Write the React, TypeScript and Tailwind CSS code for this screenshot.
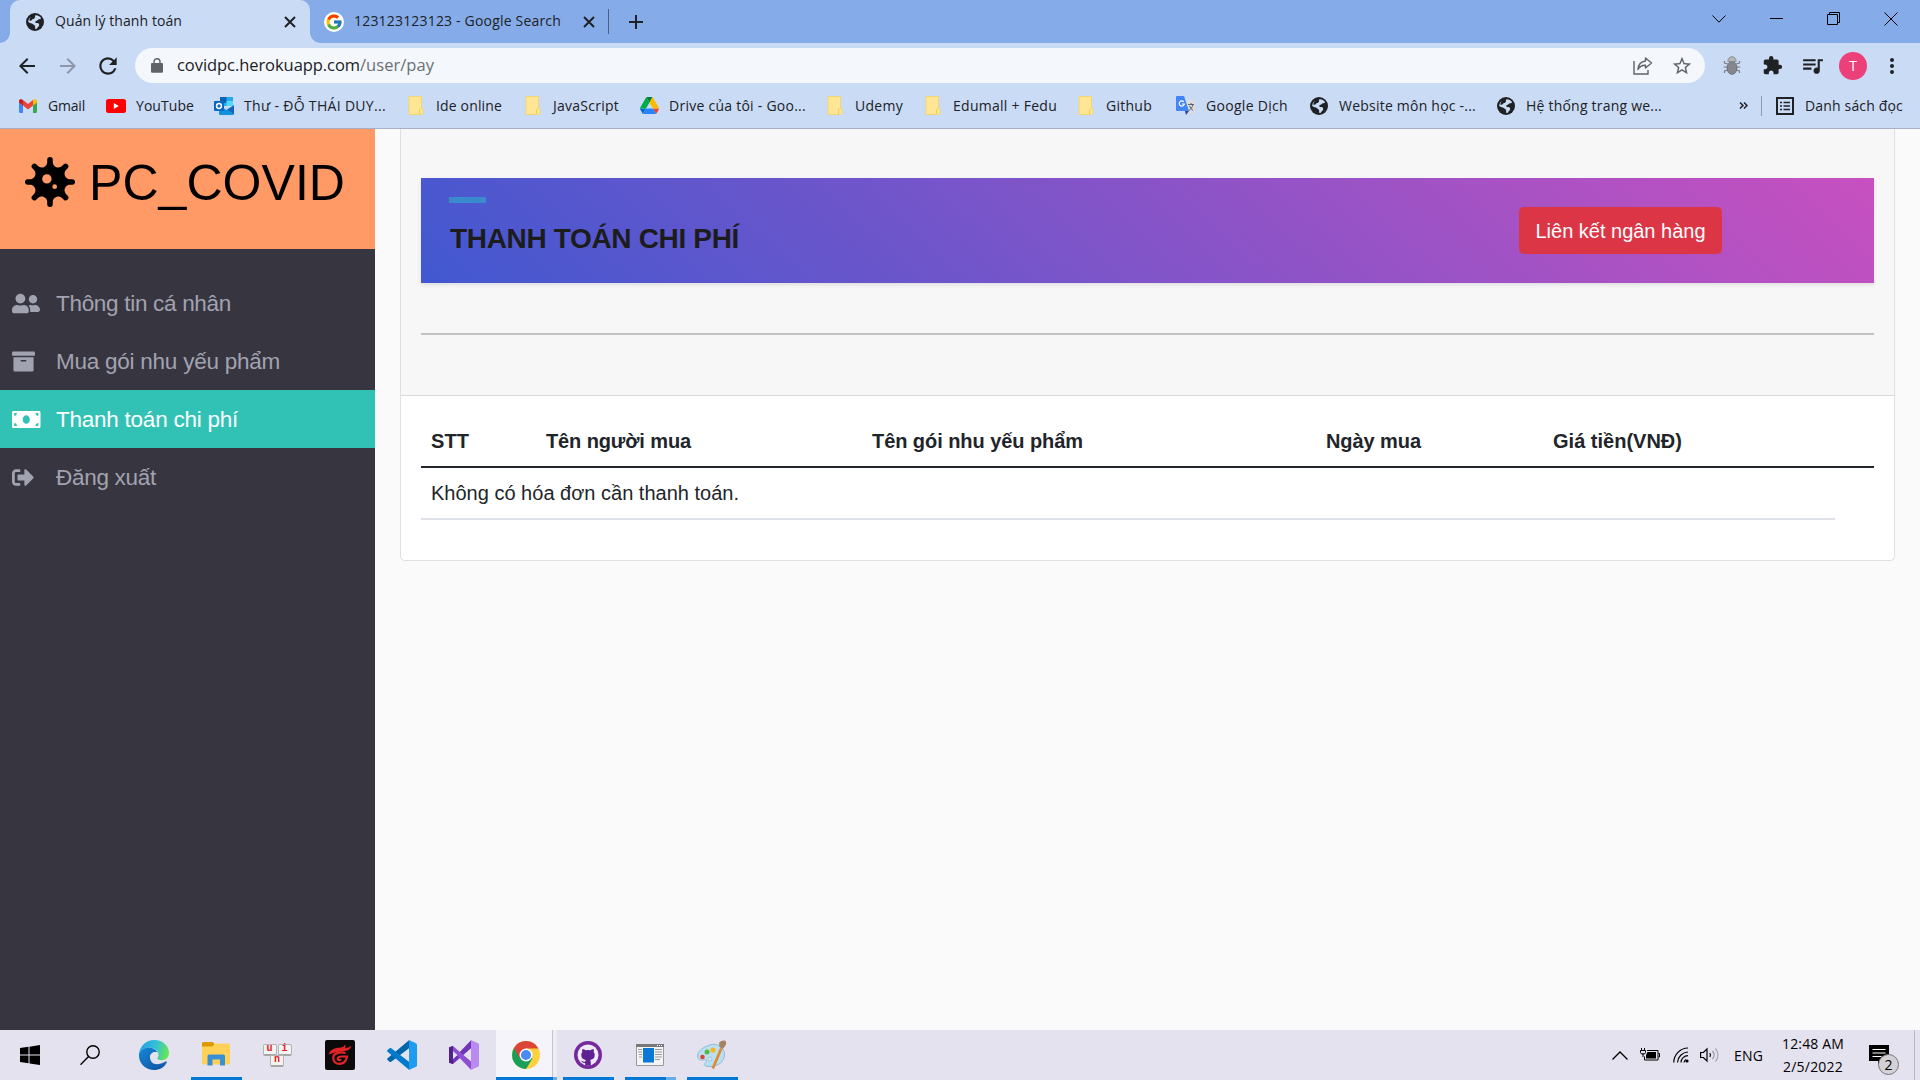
import React, { useLayoutEffect, useRef, type ReactNode } from 'react';
import { FaVirus, FaUserFriends, FaArchive, FaSignOutAlt, FaMoneyBill } from 'react-icons/fa';
import { MdQueueMusic, MdExtension, MdStarBorder, MdArrowBack, MdArrowForward, MdRefresh } from 'react-icons/md';
import { FcGoogle } from 'react-icons/fc';

/* A single line of text whose letter spacing is tuned to fill the given width. */
function Fit({ w, children, className = '' }: { w: number; children: string; className?: string }) {
  const ref = useRef<HTMLSpanElement>(null);
  useLayoutEffect(() => {
    const el = ref.current;
    if (!el) return;
    el.style.letterSpacing = '0px';
    const natural = el.getBoundingClientRect().width;
    el.style.letterSpacing = `${(w - natural) / children.length}px`;
  }, [w, children]);
  return (
    <span ref={ref} className={`inline-block whitespace-nowrap ${className}`}>
      {children}
    </span>
  );
}

function CloseX() {
  return (
    <svg width="12" height="12" viewBox="0 0 12 12" stroke="#202124" strokeWidth="2" className="shrink-0">
      <path d="M1 1l10 10M11 1L1 11" />
    </svg>
  );
}

function Globe() {
  return (
    <svg width="18" height="18" viewBox="0 0 18 18" className="shrink-0">
      <circle cx="9" cy="9" r="9" fill="#202124" />
      <path d="M9.500 2.200C12 2.100 14 3.400 15 5c-.2 1.200-1 1.200-2 1.300-1.200.1-1.300 1.200-2.400 1.500-1 .3-1.600.8-1.200 1.700.5.9 1.800.3 2.800.8 1 .6 1.200 1.300.8 2.400-.4 1-1.300 1.300-1.700 2.200-.3.7-1 1-1.800 1.100-.6-.8-.2-1.900-.4-2.800-.3-1.200-1.600-1.400-2.400-2.200-.9-.9-2.800-.6-4.500-2C2.300 6.500 3.500 4.700 5.200 3.500c.3 1 .2 1.800 1.200 2.200 1.200.4 2-.3 2.100-1.400.1-.8.3-1.500 1-2.100z" fill="#cadbf6" />
      <path d="M7.200 1.500C9 2.200 9.500 3.500 8.600 5 7.800 6.300 6.500 5.500 5.800 7c-.5 1-1.500.9-2.500.5C3.500 5 5 2.500 7.200 1.500z" fill="#202124" />
    </svg>
  );
}

function TabStrip() {
  return (
    <header className="flex h-[43px] bg-[#85ace9]">
      <div className="relative ml-2.5 flex w-[300px] items-center rounded-t-[10px] bg-[#cadbf6] pr-3.5 pl-4">
        <span className="absolute bottom-0 -left-2.5 size-2.5 bg-[radial-gradient(circle_at_0_0,#85ace9_9.5px,#cadbf6_10px)]" />
        <span className="absolute -right-2.5 bottom-0 size-2.5 bg-[radial-gradient(circle_at_100%_0,#85ace9_9.5px,#cadbf6_10px)]" />
        <Globe />
        <Fit w={127} className="ml-[11px] -translate-y-px text-[14px]">Quản lý thanh toán</Fit>
        <span className="ml-auto"><CloseX /></span>
      </div>
      <div className="flex w-[298px] items-center pl-3.5">
        <span className="flex size-5 items-center justify-center rounded-full bg-white"><FcGoogle size={18} /></span>
        <Fit w={207} className="ml-[10px] -translate-y-px text-[14px]">123123123123 - Google Search</Fit>
        <span className="ml-[22px]"><CloseX /></span>
      </div>
      <div className="my-auto h-[25px] w-px bg-[#4b5f80]" />
      <svg width="16" height="16" viewBox="0 0 16 16" stroke="#202124" strokeWidth="2" className="my-auto ml-[19px]">
        <path d="M8 1v14M1 8h14" />
      </svg>
      <div className="mt-[11px] mr-[22px] ml-auto flex h-[15px] items-center gap-[44px] text-black">
        <svg width="14" height="8" viewBox="0 0 14 8" fill="none" stroke="currentColor"><path d="M.5 .5L7 7.2L13.500 .5" /></svg>
        <svg width="13" height="1" viewBox="0 0 13 1"><path d="M0 0h13v1H0z" /></svg>
        <svg width="13" height="13" viewBox="0 0 13 13" fill="none" stroke="currentColor"><path d="M.5 2.500h10v10h-10zM2.500 2.500v-2h10v10h-2" /></svg>
        <svg width="14" height="14" viewBox="0 0 14 14" stroke="currentColor"><path d="M.5 .5l13 13M13.500 .5l-13 13" /></svg>
      </div>
    </header>
  );
}

function BeetleIcon() {
  return (
    <svg width="18" height="19" viewBox="0 0 18 19" fill="none" stroke="#7c7f84" strokeWidth="1.200">
      <path d="M5 8L1.500 7V5M4.500 11H.5M5 14l-3.500 1v2M13 8l3.500-1V5M13.500 11h4M13 14l3.500 1v2" />
      <ellipse cx="9" cy="12" rx="5" ry="6.300" fill="#85888c" stroke="#64676b" strokeWidth=".8" />
      <path d="M4.800 5.500a4.200 4.800 0 0 1 8.400 0z" fill="#b5b5b5" strokeWidth=".8" />
    </svg>
  );
}

function Toolbar() {
  return (
    <div className="flex h-10 items-center bg-[#cadbf6] pt-[5px]">
      <MdArrowBack size={24} className="ml-[15px] text-[#202124]" />
      <MdArrowForward size={24} className="ml-[17px] text-[#8c96a8]" />
      <MdRefresh size={26} className="ml-[15px] text-[#202124]" />
      <div className="ml-[14px] flex h-[35px] w-[1570px] items-center rounded-full bg-[#f4f8fd] pr-[12px] pl-4">
        <svg width="12" height="15" viewBox="0 0 12 15" fill="#5f6368">
          <path d="M1.500 5h9A1.200 1.200 0 0 1 12 6.200v7.300a1.200 1.200 0 0 1-1.200 1.200H1.200A1.200 1.200 0 0 1 0 13.500V6.200A1.200 1.200 0 0 1 1.500 5z" />
          <path d="M3 6V3.700a3 3 0 0 1 6 0V6" fill="none" stroke="#5f6368" strokeWidth="1.400" />
        </svg>
        <div className="ml-[14px] flex text-[16.5px] text-[#202124]">
          <Fit w={183}>covidpc.herokuapp.com</Fit>
          <Fit w={74} className="text-[#6b6f75]">/user/pay</Fit>
        </div>
        <svg width="20" height="18" viewBox="0 0 20 18" fill="none" stroke="#5f6368" strokeWidth="1.400" className="mr-[18px] ml-auto">
          <path d="M1 4v13h14v-4" />
          <path d="M12.500 1l6 5-6 5V8.200C9 8 6.500 9.500 5 12.500c.3-5 3-8 7.500-8.500z" strokeLinejoin="round" />
        </svg>
        <MdStarBorder size={22} className="text-[#5f6368]" />
      </div>
      <span className="ml-[18px]"><BeetleIcon /></span>
      <MdExtension size={21} className="ml-[21px] text-[#202124]" />
      <MdQueueMusic size={25} className="ml-[17px] text-[#202124]" />
      <span className="ml-3.5 flex size-7 items-center justify-center rounded-full bg-[#ec407a] text-[14px] text-white">T</span>
      <svg width="6" height="18" viewBox="0 0 6 18" fill="#202124" className="ml-[22px]">
        <circle cx="3" cy="3" r="2" /><circle cx="3" cy="9" r="2" /><circle cx="3" cy="15" r="2" />
      </svg>
    </div>
  );
}

function Gmail() {
  return (
    <svg width="18" height="14" viewBox="0 0 18 14">
      <path d="M0 3v9.500A1.500 1.500 0 0 0 1.500 14H4V5.500z" fill="#4285f4" />
      <path d="M18 3v9.500a1.500 1.500 0 0 1-1.500 1.500H14V5.500z" fill="#34a853" />
      <path d="M4 1l5 4 5-4v5.500l-5 4-5-4z" fill="#ea4335" />
      <path d="M0 3V2A1.900 1.900 0 0 1 3 .4L4 1v5.500L0 3.600z" fill="#c5221f" />
      <path d="M18 3V2a1.900 1.900 0 0 0-3-1.600L14 1v5.500l4-2.900z" fill="#fbbc04" />
    </svg>
  );
}
function Youtube() {
  return (
    <svg width="20" height="14" viewBox="0 0 20 14"><rect width="20" height="14" rx="2.500" fill="#f00" /><path d="M7.800 4v6l5-3z" fill="#fff" /></svg>
  );
}
function Outlook() {
  return (
    <svg width="20" height="18" viewBox="0 0 20 18">
      <path d="M6 0h13v9H6z" fill="#28a8ea" /><path d="M6 0h6.500v6H6z" fill="#0364b8" /><path d="M12.500 4H19v5h-6.500z" fill="#50d9ff" />
      <path d="M5 8l7.500 5L20 8v9a1 1 0 0 1-1 1H6a1 1 0 0 1-1-1z" fill="#1490df" /><path d="M20 8.500V17l-7-4.500z" fill="#1565c0" />
      <rect y="4" width="10" height="10" rx="1" fill="#0a67c2" /><circle cx="5" cy="9" r="2.400" fill="none" stroke="#fff" strokeWidth="1.500" />
    </svg>
  );
}
function Folder() {
  return (
    <svg width="16" height="19" viewBox="0 0 16 19"><path d="M1 .5h12.500V12l1.500 1v4.500l-1 1H1z" fill="#ffe694" stroke="#f3d573" /><path d="M11.500 18v-4l2-2" fill="none" stroke="#f0c95a" /></svg>
  );
}
function Drive() {
  return (
    <svg width="19" height="17" viewBox="0 0 87.300 78">
      <path d="m6.600 66.850 3.850 6.650c.8 1.400 1.950 2.500 3.300 3.300l13.750-23.800h-27.500c0 1.550.4 3.100 1.200 4.500z" fill="#0066da" />
      <path d="m43.650 25-13.750-23.800c-1.350.8-2.500 1.900-3.300 3.300l-25.400 44a9.060 9.060 0 0 0 -1.200 4.500h27.500z" fill="#00ac47" />
      <path d="m73.550 76.800c1.350-.8 2.500-1.900 3.300-3.300l1.600-2.750 7.650-13.250c.8-1.400 1.200-2.950 1.200-4.500h-27.502l5.852 11.500z" fill="#ea4335" />
      <path d="m43.650 25 13.750-23.800c-1.350-.8-2.900-1.200-4.500-1.200h-18.500c-1.600 0-3.150.45-4.500 1.200z" fill="#00832d" />
      <path d="m59.800 53h-32.300l-13.750 23.800c1.350.8 2.900 1.200 4.500 1.200h50.800c1.600 0 3.150-.45 4.500-1.200z" fill="#2684fc" />
      <path d="m73.400 26.500-12.700-22c-.8-1.400-1.950-2.500-3.300-3.300l-13.750 23.800 16.150 28h27.450c0-1.550-.4-3.100-1.200-4.500z" fill="#ffba00" />
    </svg>
  );
}
function Translate() {
  return (
    <svg width="19" height="19" viewBox="0 0 19 19">
      <path d="M8 4h10a1 1 0 0 1 1 1v12a1 1 0 0 1-1 1h-7z" fill="#dadce0" />
      <path d="M12 8.500h6M15 7v1.500M17 8.500c-.6 2.500-2 4.500-4 6M13.500 10c.8 2 2 3.500 3.700 4.500" stroke="#5f6368" fill="none" />
      <path d="M1 0h7l5 15H1a1 1 0 0 1-1-1V1a1 1 0 0 1 1-1z" fill="#4285f4" /><path d="M9 15h4l-3 4z" fill="#3040a8" />
      <path d="M7.800 5.800A2.600 2.600 0 1 0 8.400 8H6" stroke="#fff" strokeWidth="1.200" fill="none" />
    </svg>
  );
}

/* icon, label, icon slot width, label width, distance to the next bookmark */
const bookmarks: [ReactNode, string, number, number, number][] = [
  [<Gmail />, 'Gmail', 29, 37, 87],
  [<Youtube />, 'YouTube', 30, 58, 108],
  [<Outlook />, 'Thư - ĐỖ THÁI DUY...', 30, 142, 194],
  [<Folder />, 'Ide online', 28, 66, 117],
  [<Folder />, 'JavaScript', 28, 66, 115],
  [<Drive />, 'Drive của tôi - Goo...', 29, 137, 187],
  [<Folder />, 'Udemy', 28, 48, 98],
  [<Folder />, 'Edumall + Fedu', 28, 104, 153],
  [<Folder />, 'Github', 28, 46, 98],
  [<Translate />, 'Google Dịch', 30, 82, 134],
  [<Globe />, 'Website môn học -...', 29, 137, 187],
  [<Globe />, 'Hệ thống trang we...', 29, 136, 244],
];

function BookmarkBar() {
  return (
    <div className="flex h-[46px] items-center border-b border-[#a5b0c8] bg-[#cadbf6] pl-[19px] text-[14px]">
      {bookmarks.map(([icon, label, iw, lw, step], i) => (
        <div key={i} className="flex shrink-0 items-center" style={{ width: step }}>
          <span className="shrink-0" style={{ width: iw }}>{icon}</span>
          <Fit w={lw}>{label}</Fit>
        </div>
      ))}
      <svg width="9" height="7" viewBox="0 0 9 7" fill="none" stroke="#202124" strokeWidth="1.500" className="-ml-[2px]">
        <path d="M1 .5l3 3-3 3M5 .5l3 3-3 3" />
      </svg>
      <div className="ml-[13px] h-5 w-px bg-[#8d9ab3]" />
      <svg width="18" height="18" viewBox="0 0 18 18" fill="none" stroke="#202124" strokeWidth="2" className="ml-[14px]">
        <path d="M1 1h16v16H1z" /><path d="M4 5.500h2M7.500 5.500H14M4 9h2M7.500 9H14M4 12.500h2M7.500 12.500H14" strokeWidth="1.600" />
      </svg>
      <Fit w={98} className="ml-[11px]">Danh sách đọc</Fit>
    </div>
  );
}

const menu: { icon: typeof FaVirus; label: string; w: number; size: string; active?: boolean }[] = [
  { icon: FaUserFriends, label: 'Thông tin cá nhân', w: 175, size: 'h-[23px] w-[28px]' },
  { icon: FaArchive, label: 'Mua gói nhu yếu phẩm', w: 224, size: 'h-[23px] w-[23px]' },
  { icon: FaMoneyBill, label: 'Thanh toán chi phí', w: 182, size: 'h-[23px] w-[28.5px]', active: true },
  { icon: FaSignOutAlt, label: 'Đăng xuất', w: 100, size: 'h-[23px] w-[22px]' },
];

function Sidebar() {
  return (
    <aside className="flex w-[375px] shrink-0 flex-col bg-[#373640]">
      <div className="flex h-[120px] bg-[#ff9966] pt-7 pl-[25px] text-black">
        <FaVirus size={50} />
        <Fit w={256} className="mt-[-4px] ml-[14px] text-[50px] leading-[60px]">PC_COVID</Fit>
      </div>
      <nav className="mt-[25px]">
        {menu.map(({ icon: Icon, label, w, size, active }) => (
          <a key={label} className={`flex h-[58px] items-center pl-3 text-[22.5px] ${active ? 'bg-[#32c2b5] text-white' : 'text-[#a2a3b1]'}`}>
            <span className="w-11"><Icon className={size} /></span>
            <Fit w={w} className="translate-y-px">{label}</Fit>
          </a>
        ))}
      </nav>
    </aside>
  );
}

function Content() {
  return (
    <main className="flex-1 bg-[#fafafa] pr-[25px] pl-[25px]">
      <section className="h-[432px] overflow-hidden rounded-b-[5px] border border-t-0 border-[#dfdfdf] bg-white text-[20px] text-[#212529]">
        <div className="h-[267px] border-b border-[#d8d8d8] bg-[#f7f7f7] px-5 pt-[49px]">
          <div className="flex h-[105px] bg-[linear-gradient(43deg,#4158d0_0%,#c850c0_100%)] pl-7 shadow-[0_2px_4px_rgba(0,0,0,0.1)]">
            <div className="w-[1070px] pt-[19px]">
              <div className="h-1.5 w-[37px] bg-[#3a8bcd]" />
              <h1 className="mt-[18px] ml-px leading-[36px]"><Fit w={289} className="text-[28px] font-bold text-[#1c1c1c]">THANH TOÁN CHI PHÍ</Fit></h1>
            </div>
            <button className="mt-[29px] flex h-[47px] w-[203px] items-center justify-center rounded-[5px] bg-[#dc3545] text-white">
              <Fit w={170}>Liên kết ngân hàng</Fit>
            </button>
          </div>
          <div className="mt-[50px] h-0.5 bg-[#c2c2c2]" />
        </div>
        <div className="px-5 pt-5">
          <div className="flex h-[52px] items-center border-b-2 border-[#212529] pl-2.5 font-bold">
            <div className="w-[115px]"><Fit w={38}>STT</Fit></div>
            <div className="w-[326px]"><Fit w={145}>Tên người mua</Fit></div>
            <div className="w-[454px]"><Fit w={211}>Tên gói nhu yếu phẩm</Fit></div>
            <div className="w-[227px]"><Fit w={95}>Ngày mua</Fit></div>
            <div><Fit w={129}>Giá tiền(VNĐ)</Fit></div>
          </div>
          <div className="flex h-[52px] w-[1414px] items-center border-b-2 border-[#dee2e6] pl-2.5">
            <Fit w={308}>Không có hóa đơn cần thanh toán.</Fit>
          </div>
        </div>
      </section>
    </main>
  );
}

const WindowsLogo = () => (
  <svg width="20" height="20" viewBox="0 0 20 20"><path d="M0 3l8.500-1.200v7.700H0zM9.500 1.700L20 0v9.500H9.500zM0 10.500h8.500v7.700L0 17zM9.500 10.500H20V20L9.500 18.400z" /></svg>
);
const SearchIcon = () => (
  <svg width="20" height="20" viewBox="0 0 20 20" fill="none" stroke="#000" strokeWidth="1.400"><circle cx="13" cy="7" r="6.200" /><path d="M8.600 11.600L.5 19.700" /></svg>
);
const Edge = () => (
  <svg width="30" height="30" viewBox="0 0 30 30">
    <defs>
      <linearGradient id="e1" x1="0" x2="1" y1=".3" y2=".5"><stop stopColor="#1f9fe0" /><stop offset=".55" stopColor="#35c1d8" /><stop offset="1" stopColor="#66e84f" /></linearGradient>
      <linearGradient id="e2" x1="0" x2="1" y1="0" y2="1"><stop stopColor="#1488d8" /><stop offset="1" stopColor="#0d4f9e" /></linearGradient>
    </defs>
    <path d="M0 14C1 6 7 0 15.500 0 24 0 30 6 30 13c0 4.500-3.500 7.500-7.500 7.500-3 0-4.500-1.200-4.300-2.300.3-1 1.200-1.300 1.200-3.700C19.400 10 14 7 9 7.500 5 8 1.500 10 0 14z" fill="url(#e1)" />
    <path d="M0 14C1.500 9.500 6 7.300 10 7.500c4 .2 7.500 2.500 8.500 5-4-1.500-7.500 1.500-7.500 5.500C11 25 18.500 28 27.500 23 25 27.500 20.500 30 15 30 6.500 30-.7 23.500 0 14z" fill="url(#e2)" />
    <path d="M11 17.500c0-3 2-5.300 5-5.500 1.800.5 3 1.300 3.300 3-.2 1.800-1.400 2.500-1.100 3.500.6 1.600 4 2.600 7.500 1.300 1.500-.5 2.300-.2 1.800.7C22 27 12 25.500 11 17.500z" fill="#e5e2ef" />
    <path d="M11 17.500c0 6 6.500 9.500 15.500 4 1-.6 1.600.3 1 1.500-3 2.800-8 4.300-11 3.200-4-1.400-6.500-4.700-5.500-8.700z" fill="#1460b0" />
  </svg>
);
const Explorer = () => (
  <svg width="28" height="24" viewBox="0 0 28 24">
    <path d="M0 1.500A1.500 1.500 0 0 1 1.500 0H11l2 3-2 2H0z" fill="#dc9a00" />
    <path d="M0 4.500h10.500L13 1.500h13.500A1.500 1.500 0 0 1 28 3v18a1.500 1.500 0 0 1-1.500 1.500h-25A1.500 1.500 0 0 1 0 21z" fill="#ffd257" />
    <path d="M5.500 23.500V14a1.500 1.500 0 0 1 1.500-1.500h14.500A1.500 1.500 0 0 1 23 14v9.500h-5v-6h-7.500v6z" fill="#3a8ed4" />
  </svg>
);
const Key = ({ c }: { c: string }) => (
  <span className="flex h-[12px] w-[14px] items-center justify-center rounded-[2px] border border-[#b4b4b4] border-b-2 border-b-[#a5a5a5] bg-[#f3f3f3] font-['Liberation_Mono'] text-[10px] leading-none font-bold text-[#e02020]">{c}</span>
);
const Unikey = () => (
  <span className="flex flex-col items-center"><span className="flex gap-px"><Key c="u" /><Key c="i" /></span><span className="-mt-px"><Key c="n" /></span></span>
);
const Garena = () => (
  <svg width="30" height="30" viewBox="0 0 30 30"><rect width="30" height="30" rx="2" fill="#0a0a0a" />
    <path d="M3.500 14.500C5 9.500 10 8 15.500 7.600c2.300-.2 3.800-1 4.300-3 1 1.200 1 2.500.4 3.600 2.500-.5 4-.9 6.300-2.200-.8 3-3 4.600-7 5.100-5.500.6-9.500 1-11.500 2.200-1.500.3-3 .5-4.500 1.200z" fill="#e02428" />
    <path d="M20.500 13c-6-1.500-12.300.2-12.300 5 0 3.700 3 5.800 6.300 5.800 4.500 0 6.800-3 7.500-7.300h-5c-2.500 0-4.200.8-4.200 2.300 0 1.200 1.300 1.700 3.400 1" fill="none" stroke="#e02428" strokeWidth="2.200" />
  </svg>
);
const VsCode = () => (
  <svg width="30" height="30" viewBox="0 0 30 30">
    <path d="M22 .2v8.100L4.200 21.800a1.300 1.300 0 0 1-1.600 0L.6 20a1.200 1.200 0 0 1 0-1.800z" fill="#0065a9" />
    <path d="M22 29.800v-8.100L4.200 8.200a1.300 1.300 0 0 0-1.600 0L.6 10a1.200 1.200 0 0 0 0 1.800z" fill="#007acc" />
    <path d="M22 0l7 3.200a1.800 1.800 0 0 1 1 1.600v20.400a1.800 1.800 0 0 1-1 1.600L22 30z" fill="#1f9cf0" />
  </svg>
);
const VisualStudio = () => (
  <svg width="30" height="30" viewBox="0 0 30 30">
    <path d="M0 7.500L4 6v18l-4-1.500z" fill="#52218a" />
    <path d="M22 .2v8.100L4 24 .5 22.700z" fill="#6f35b5" /><path d="M4 6l18 15.500v8.300L.5 7.500z" fill="#8e4fd0" />
    <path d="M22 0l7 3.200a1.800 1.800 0 0 1 1 1.600v20.400a1.800 1.800 0 0 1-1 1.600L22 30z" fill="#b98af2" />
    <path d="M4 11.500L8.500 15 4 18.800z" fill="#e5e2ef" />
    <path d="M0 7.500L4 6v18l-4-1.500z" fill="#52218a" />
  </svg>
);
const Chrome = () => (
  <svg width="28" height="28" viewBox="0 0 28 28">
    <circle cx="14" cy="14" r="14" fill="#fdd140" />
    <path d="M14 14L1.900 7A14 14 0 0 0 14 28l6.500-10.500z" fill="#1a9f5a" />
    <path d="M14 7.500h12.400A14 14 0 0 0 1.900 7l6.200 10.500L14 14z" fill="#db4437" />
    <circle cx="14" cy="14" r="6.500" fill="#fff" /><circle cx="14" cy="14" r="5.100" fill="#4a8af4" />
  </svg>
);
const GithubDesktop = () => (
  <svg width="28" height="28" viewBox="0 0 28 28">
    <circle cx="14" cy="14" r="14" fill="#75299c" /><circle cx="14" cy="14" r="10.500" fill="#efe9f6" />
    <path d="M8.500 8c1.500 0 2.500.8 3.200 1.300a10 10 0 0 1 4.600 0C17 8.800 18 8 19.500 8c.5 1.300.4 2.300.1 3 1 1.200 1.200 2.300 1.100 3.500-.2 3-2.300 4.200-4.700 4.500.6.7.8 1.400.8 2.300V24.500h-5.600V22c-2.700.4-3-1.500-4.200-2.300 1.900-.3 2 1.500 4.200 1 0-.7.3-1.300.8-1.700-2.400-.3-4.500-1.500-4.700-4.500-.1-1.200.1-2.300 1.100-3.500-.3-.7-.4-1.700.1-3z" fill="#5d2191" />
  </svg>
);
const WindowApp = () => (
  <svg width="28" height="22" viewBox="0 0 28 22">
    <path d="M.5.500h27v21H.500z" fill="#f4f4f4" stroke="#9a9a9a" /><path d="M0 0h28v3H0z" fill="#777" />
    <path d="M21 1.500h1M23 1.500h1M25 1.500h1" stroke="#fff" /><path d="M7 4h11v14.500H7z" fill="#0b78d8" />
    <path d="M2 5.500h4M2 8h4M3 10.500h3M3 13h3M19 5.500h7M19 8h7M19 10.500h7M19 13h7M19 15.500h5" stroke="#9b9b9b" />
  </svg>
);
const Paint = () => (
  <svg width="30" height="30" viewBox="0 0 30 30">
    <path d="M13 5C20 2.500 27.500 7 27.500 14.500 27.500 22 21 26.500 12 26.500c-5 0-6-2.500-3.500-4 2-1.300 1-3-2-2.500-3 .6-6-.5-6-4C.5 11 6 7 13 5z" fill="#b9dff2" stroke="#7fb2d2" strokeWidth=".8" />
    <circle cx="5.500" cy="17" r="2.300" fill="#dd4436" /><circle cx="10" cy="12" r="2.500" fill="#57b847" /><circle cx="16" cy="10" r="2.600" fill="#f9b61c" />
    <circle cx="13" cy="19" r="2" fill="#e5e2ef" stroke="#7fb2d2" strokeWidth=".6" />
    <path d="M23 8l2.500 1L17 29l-2.500-1z" fill="#e08a2c" /><path d="M22 3c2-2.500 5-3 6.500-2 1.500 1.500.5 5-3 8l-3-2z" fill="#a58262" />
  </svg>
);

function Running({ icon, className, bar, tail = '' }: { icon: ReactNode; className: string; bar: string; tail?: string }) {
  return (
    <div className={`flex shrink-0 flex-col ${className}`}>
      <div className="flex flex-1 items-center justify-center">{icon}</div>
      <div className="flex h-[3px]">
        <span className={`bg-[#0078d7] ${bar}`} />
        {tail && <span className={`bg-[#66aee6] ${tail}`} />}
      </div>
    </div>
  );
}

function Taskbar() {
  return (
    <footer className="flex h-[50px] bg-[#e5e2ef] text-black">
      <div className="flex w-[60px] items-center justify-center"><WindowsLogo /></div>
      <div className="flex w-[60px] items-center justify-center"><SearchIcon /></div>
      <div className="flex w-[68px] items-center justify-center"><Edge /></div>
      <Running icon={<span className="mt-px mr-[2px]"><Explorer /></span>} className="ml-[3px] w-[51px]" bar="w-[51px]" />
      <div className="ml-[4px] flex w-[62px] items-center justify-center"><Unikey /></div>
      <div className="flex w-[64px] items-center justify-center"><Garena /></div>
      <div className="flex w-[60px] items-center justify-center"><VsCode /></div>
      <div className="flex w-[64px] items-center justify-center"><VisualStudio /></div>
      <Running icon={<span className="mt-[3px] mr-[2px]"><Chrome /></span>} className="w-[61px] bg-[linear-gradient(90deg,#f5f4fa_56px,#c5c3cf_56px,#c5c3cf_57px,#eeecf5_57px)]" bar="w-[57px]" tail="w-1" />
      <Running icon={<span className="mt-[3px] -ml-[2px]"><GithubDesktop /></span>} className="ml-[6px] w-[51px]" bar="w-[51px]" />
      <Running icon={<span className="mt-[3px] mr-[2px]"><WindowApp /></span>} className="ml-[11px] w-[51px]" bar="w-[41px]" tail="w-2.5" />
      <Running icon={<span className="mt-[3px] mr-[1px]"><Paint /></span>} className="ml-[11px] w-[51px]" bar="w-[51px]" />

      <div className="ml-auto flex items-center">
        <svg width="16" height="9" viewBox="0 0 16 9" fill="none" stroke="#000" strokeWidth="1.300"><path d="M.5 8.500L8 1l7.500 7.500" /></svg>
        <svg width="20" height="14" viewBox="0 0 20 14" fill="none" stroke="#000" className="ml-3">
          <path d="M7 2.500h11v9.500H4.500V8.500M18.500 5.500h1v3.500h-1" strokeWidth="1" /><path d="M7.500 4h8.500v6.500H6V7z" fill="#000" stroke="none" />
          <path d="M1.500 0v2M4.500 0v2M3 5v4" /><path d="M.5 2.500h5v2L4.500 6h-3l-1-1.500z" />
        </svg>
        <svg width="16" height="16" viewBox="0 0 16 16" fill="none" stroke="#000" strokeWidth="1.200" className="ml-[13px]">
          <path d="M.8 15.500A14.500 14.500 0 0 1 15 1M4.500 15.500A11 11 0 0 1 15 5M8 15.500A7 7 0 0 1 15 8.600M11 15.500A4.500 4.500 0 0 1 13 12.500" /><circle cx="14" cy="14" r="1.600" fill="#000" stroke="none" />
        </svg>
        <svg width="21" height="16" viewBox="0 0 21 16" fill="none" stroke="#000" strokeWidth="1.200" className="ml-[11px]">
          <path d="M.6 5.500h2.800L7 2v12L3.400 10.500H.600z" /><path d="M9.800 6a3.500 3.500 0 0 1 0 4" />
          <path d="M12.500 4a6 6 0 0 1 0 8" stroke="#8c8a94" /><path d="M15.500 1.500a10 10 0 0 1 0 13" stroke="#a9a7b2" />
        </svg>
        <Fit w={29} className="ml-[13px] text-[14px]">ENG</Fit>
        <div className="ml-[19px] flex w-[62px] flex-col items-center text-[14px] leading-[23px]">
          <Fit w={62}>12:48 AM</Fit>
          <Fit w={60}>2/5/2022</Fit>
        </div>
        <div className="relative ml-[25px] h-[30px] w-[30px]">
          <svg width="20" height="20" viewBox="0 0 20 20" className="mt-[5px]"><path d="M0 0h20v16h-7l-4 4v-4H0z" /><path d="M3.500 4.500h13M3.500 8h13M3.500 11.500h9" stroke="#fff" strokeWidth="1.200" /></svg>
          <span className="absolute top-[14px] left-[9px] flex size-[21px] items-center justify-center rounded-full border border-[#77757c] bg-[#d3d1d6] text-[14px]">2</span>
        </div>
        <div className="mr-[5px] ml-[15px] h-[50px] w-px bg-[#b9b6c4]" />
      </div>
    </footer>
  );
}

export default function App() {
  return (
    <div className="flex h-[1080px] w-[1920px] flex-col overflow-hidden font-['Open_Sans',sans-serif] text-[#202124]">
      <TabStrip />
      <Toolbar />
      <BookmarkBar />
      <div className="flex flex-1 font-['Liberation_Sans',sans-serif]">
        <Sidebar />
        <Content />
      </div>
      <Taskbar />
    </div>
  );
}
